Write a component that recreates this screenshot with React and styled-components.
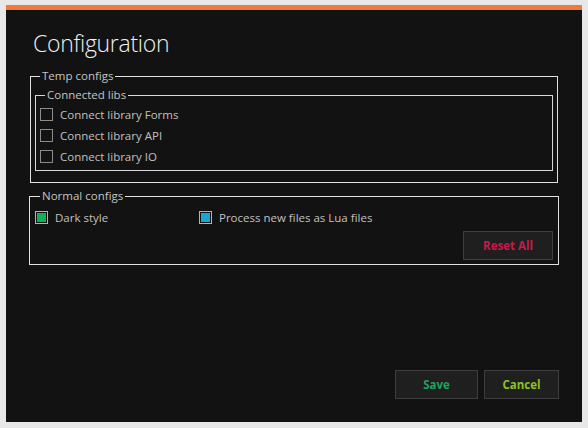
import React from 'react'
import styled, { createGlobalStyle } from 'styled-components'

const GlobalStyle = createGlobalStyle`
  html, body {
    margin: 0;
    padding: 0;
    background: #e8e8e8;
  }
  body {
    font-family: 'Open Sans', 'Liberation Sans', sans-serif;
  }
`

const Page = styled.div`
  width: 588px;
  height: 428px;
  padding: 5px 6px 0 6px;
  box-sizing: border-box;
`

const Window = styled.div`
  width: 576px;
  height: 417px;
  box-sizing: border-box;
  background: #121212;
  border-top: 5px solid #f07a3c;
  display: flex;
  flex-direction: column;
  padding: 0 23px 23px 23px;
`

const Title = styled.h1`
  margin: 17px 0 0 4px;
  font-size: 23px;
  line-height: 32px;
  font-weight: 300;
  color: #f0f0f0;
  letter-spacing: -0.3px;
`

const Group = styled.fieldset`
  margin: ${(p) => p.$top || 0}px ${(p) => p.$mr || 0}px 0 ${(p) => p.$ml || 0}px;
  padding: ${(p) => p.$pad || '0 5px 5px 5px'};
  border: 1px solid ${(p) => (p.$inner ? '#d8d8d8' : '#e0e0e0')};
  min-width: 0;
`

const Legend = styled.legend`
  margin-left: 5px;
  padding: 0 2px;
  font-size: 11.5px;
  line-height: 14px;
  color: #c4c4c4;
`

const Row = styled.label`
  display: flex;
  align-items: center;
  gap: 7px;
  height: 21px;
  font-size: 11.5px;
  color: #c0c0c0;
  width: ${(p) => (p.$width ? `${p.$width}px` : 'auto')};
`

const Box = styled.span`
  width: 13px;
  height: 13px;
  box-sizing: border-box;
  border: 1px solid ${(p) => (p.$fill ? '#b4b4b4' : '#8c8c8c')};
  padding: 1px;
  background: ${(p) => p.$fill || 'transparent'};
  background-clip: content-box;
  flex-shrink: 0;
`

const Inline = styled.div`
  display: flex;
  align-items: center;
`

const Actions = styled.div`
  display: flex;
  justify-content: flex-end;
  gap: ${(p) => p.$gap || 0}px;
  margin-top: ${(p) => (p.$auto ? 'auto' : '3px')};
`

const Button = styled.button`
  width: ${(p) => p.$w}px;
  height: 29px;
  box-sizing: border-box;
  background: #1f1f1f;
  border: 1px solid #3e3e3e;
  color: ${(p) => p.$color};
  font-family: 'Open Sans', 'Liberation Sans', sans-serif;
  font-size: 11.5px;
  font-weight: 700;
  padding: 0;
  cursor: pointer;
`

const Check = ({ label, fill, width }) => (
  <Row $width={width}>
    <Box $fill={fill} />
    {label}
  </Row>
)

export default function App() {
  return (
    <>
      <GlobalStyle />
      <Page>
        <Window>
          <Title>Configuration</Title>
          <Group $top={10} $ml={1} $mr={1} $pad='0 4px 11px 4px'>
            <Legend>Temp configs</Legend>
            <Group $inner $top={5} $pad='2px 5px 3px 4px'>
              <Legend>Connected libs</Legend>
              <Check label='Connect library Forms' />
              <Check label='Connect library API' />
              <Check label='Connect library IO' />
            </Group>
          </Group>
          <Group $top={6} $pad='4px 5px 4px 5px'>
            <Legend>Normal configs</Legend>
            <Inline>
              <Check label='Dark style' fill='#12b05c' width={164} />
              <Check label='Process new files as Lua files' fill='#16a6d6' />
            </Inline>
            <Actions>
              <Button $w={90} $color='#c81a4a'>
                Reset All
              </Button>
            </Actions>
          </Group>
          <Actions $auto $gap={6}>
            <Button $w={83} $color='#1ea35c'>
              Save
            </Button>
            <Button $w={75} $color='#8ec21e'>
              Cancel
            </Button>
          </Actions>
        </Window>
      </Page>
    </>
  )
}
